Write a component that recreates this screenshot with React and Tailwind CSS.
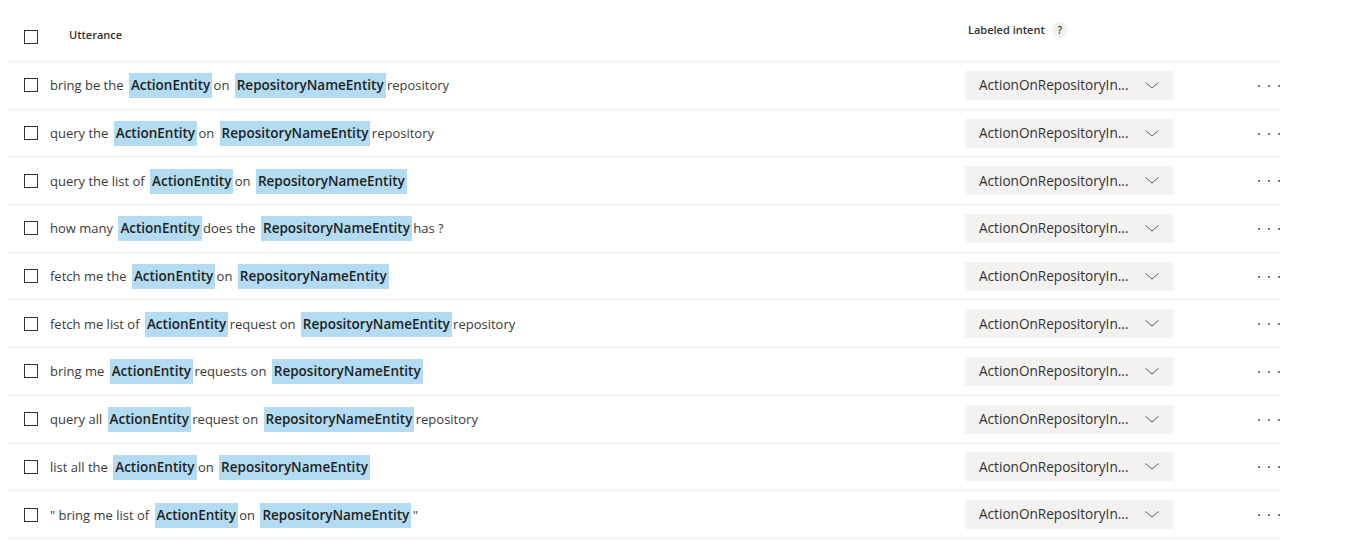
import React from 'react';

const rows = [
  ['bring be the ', { e: 'ActionEntity' }, ' on ', { e: 'RepositoryNameEntity' }, ' repository'],
  ['query the ', { e: 'ActionEntity' }, ' on ', { e: 'RepositoryNameEntity' }, ' repository'],
  ['query the list of ', { e: 'ActionEntity' }, ' on ', { e: 'RepositoryNameEntity' }],
  ['how many ', { e: 'ActionEntity' }, ' does the ', { e: 'RepositoryNameEntity' }, ' has ?'],
  ['fetch me the ', { e: 'ActionEntity' }, ' on ', { e: 'RepositoryNameEntity' }],
  ['fetch me list of ', { e: 'ActionEntity' }, ' request on ', { e: 'RepositoryNameEntity' }, ' repository'],
  ['bring me ', { e: 'ActionEntity' }, ' requests on ', { e: 'RepositoryNameEntity' }],
  ['query all ', { e: 'ActionEntity' }, ' request on ', { e: 'RepositoryNameEntity' }, ' repository'],
  ['list all the ', { e: 'ActionEntity' }, ' on ', { e: 'RepositoryNameEntity' }],
  ['" bring me list of ', { e: 'ActionEntity' }, ' on ', { e: 'RepositoryNameEntity' }, ' "'],
];

const Checkbox = () => (
  <span className="block w-[14px] h-[14px] border border-[#323130] bg-white shrink-0" />
);

const Chevron = () => (
  <svg width="14" height="7" viewBox="0 0 14 7" fill="none">
    <polyline points="0.5,0.5 7,6 13.5,0.5" stroke="#605e5c" strokeWidth="1" />
  </svg>
);

const Dots = () => (
  <div className="flex items-center gap-[8px] w-[22px] shrink-0 mt-[1px]">
    <span className="block w-[2px] h-[2px] rounded-full bg-[#484644]" />
    <span className="block w-[2px] h-[2px] rounded-full bg-[#484644]" />
    <span className="block w-[2px] h-[2px] rounded-full bg-[#484644]" />
  </div>
);

const Row = ({ parts }) => (
  <div className="flex items-center h-[47.7px] border-b border-[#edebe9] pl-[16px]">
    <Checkbox />
    <div className="ml-[12px] w-[915px] whitespace-pre text-[13px] text-[#3b3a39] pt-[1px]">
      {parts.map((p, i) =>
        typeof p === 'string' ? (
          <span key={i}>{p}</span>
        ) : (
          <span key={i} className="inline-block ml-[2px] mr-[-2px] bg-[#b3dbf2] px-[2px] py-[3px] text-[13.5px] font-semibold text-[#201f1e] leading-[19px]">
            {p.e}
          </span>
        )
      )}
    </div>
    <div className="flex items-center justify-between w-[208px] h-[29px] bg-[#f3f2f1] pl-[14px] pr-[14px] text-[13.6px] text-[#323130]">
      <span>ActionOnRepositoryIn...</span>
      <Chevron />
    </div>
    <div className="ml-[85px]">
      <Dots />
    </div>
  </div>
);

export default function App() {
  return (
    <div className="w-[1368px] h-[554px] bg-white" style={{ fontFamily: '"Open Sans", "Noto Sans", sans-serif' }}>
      <div className="ml-[8px] w-[1272px]">
        <div className="flex h-[62px] border-b border-[#edebe9] pl-[16px]">
          <div className="flex items-center w-[941px] h-[72px] pb-[2px]">
            <span className="mt-[3px]">
              <Checkbox />
            </span>
            <span className="ml-[31px] text-[11px] font-semibold text-[#323130]">Utterance</span>
          </div>
          <div className="ml-[3px] flex items-start pt-[22px]">
            <span className="text-[11px] font-semibold text-[#323130]">Labeled intent</span>
            <span className="ml-[7px] flex items-center justify-center w-[16px] h-[16px] rounded-full bg-[#f3f2f1] text-[10px] font-semibold text-[#323130]">?</span>
          </div>
        </div>
        {rows.map((r, i) => (
          <Row key={i} parts={r} />
        ))}
      </div>
    </div>
  );
}
